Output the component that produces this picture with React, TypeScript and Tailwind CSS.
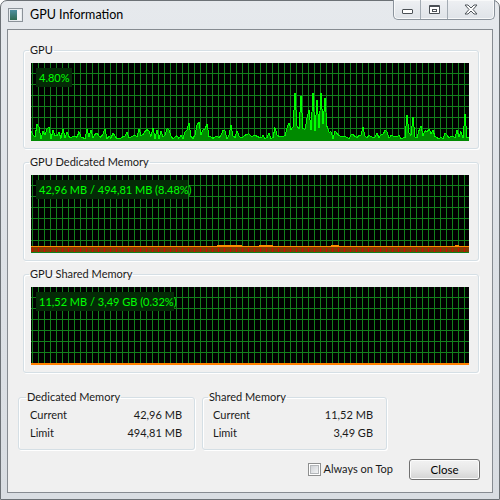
import React from "react";

const W = 438;
const H = 78;

function rng(seed: number) {
  let s = seed;
  return () => {
    s = (s * 1103515245 + 12345) % 2147483648;
    return s / 2147483648;
  };
}

function gpuSeries() {
  const r = rng(7);
  const peaks: Record<number, number> = { 264: 47, 270: 44, 278: 30, 282: 47, 286: 40, 290: 47, 294: 42, 376: 25, 382: 23, 434: 26, 168: 18, 176: 16, 200: 15 };
  const pts: [number, number][] = [];
  for (let x = 0; x <= W; x += 2) {
    let h = 1 + r() * 4;
    if (r() < 0.35) h += r() * 11;
    if (x > 150 && x < 220 && r() < 0.4) h += r() * 8;
    if (x > 256 && x < 300) h += 6 + r() * 10;
    if (peaks[x]) h = peaks[x];
    pts.push([x, H - 1 - h]);
  }
  return pts;
}

const gpu = gpuSeries();

function Grid() {
  const v = [];
  for (let x = 1; x < W; x += 6) v.push(x);
  const hz = [10, 21, 32, 43, 54, 65, 76];
  return (
    <g stroke="#13801c" strokeWidth="1" shapeRendering="crispEdges">
      {v.map((x) => (
        <line key={"v" + x} x1={x + 0.5} y1={0} x2={x + 0.5} y2={H} />
      ))}
      {hz.map((y) => (
        <line key={"h" + y} x1={0} y1={y + 0.5} x2={W} y2={y + 0.5} />
      ))}
    </g>
  );
}

const bumps = [
  [186, 24],
  [205, 6],
  [228, 14],
  [300, 8],
  [424, 4],
];

function Graph({ label, labelWidth, kind }: { label: string; labelWidth: string; kind: "gpu" | "ded" | "shared" }) {
  const reds = [];
  for (let x = 1; x < W; x += 6) reds.push(x);
  const poly = gpu.map(([x, y]) => `${x},${y}`).join(" ");
  return (
    <div className="relative w-[438px] h-[78px] bg-black">
      <svg width={W} height={H} className="block">
        <Grid />
        {kind === "gpu" && (
          <g shapeRendering="crispEdges">
            <polygon points={`0,${H} ${poly} ${W},${H}`} fill="#008a00" />
            <polyline points={poly} fill="none" stroke="#00ff00" strokeWidth="1" />
          </g>
        )}
        {kind === "ded" && (
          <g shapeRendering="crispEdges">
            <rect x={0} y={72} width={W} height={5} fill="#803c00" />
            {reds.map((x) => (
              <rect key={x} x={x} y={73} width={1} height={4} fill="#d80000" />
            ))}
            <rect x={0} y={71} width={W} height={1} fill="#ff8c00" />
            {bumps.map(([x, w]) => (
              <rect key={x} x={x} y={70} width={w} height={1} fill="#ff8c00" />
            ))}
            <rect x={0} y={77} width={W} height={1} fill="#12801a" />
          </g>
        )}
        {kind === "shared" && <rect x={0} y={76} width={W} height={2} fill="#ff8000" shapeRendering="crispEdges" />}
      </svg>
      <div className={`absolute left-[5px] top-[5px] h-[19px] ${labelWidth} bg-[#042a06] flex items-center pl-[3px] text-[11px] leading-none text-[#00ff00] whitespace-nowrap`}>
        {label}
      </div>
    </div>
  );
}

function GraphGroup({ title, children }: { title: string; children: React.ReactNode }) {
  return (
    <fieldset className="w-[456px] border border-[#d5dfe5] rounded-[3px] shadow-[inset_1px_1px_0_#ffffff,1px_1px_0_#ffffff] px-[7px] pt-[5px] pb-[7px] min-w-0">
      <legend className="-ml-[2px] px-[1px] text-[11px] leading-[16px] text-[#1a1a1a]">{title}</legend>
      {children}
    </fieldset>
  );
}

function InfoGroup({ title, rows, w, pl, pr, lm }: { title: string; rows: [string, string][]; w: string; pl: string; pr: string; lm: string }) {
  return (
    <fieldset className={`${w} ${pl} ${pr} border border-[#d5dfe5] rounded-[3px] shadow-[inset_1px_1px_0_#ffffff,1px_1px_0_#ffffff] pt-[1px] pb-[7px] min-w-0`}>
      <legend className={`${lm} px-[1px] text-[11px] leading-[16px] text-[#1a1a1a]`}>{title}</legend>
      {rows.map(([k, v]) => (
        <div key={k} className="flex h-[18px] items-center justify-between text-[11px] text-[#1a1a1a]">
          <span>{k}</span>
          <span>{v}</span>
        </div>
      ))}
    </fieldset>
  );
}

export default function App() {
  return (
    <div className="w-[500px] h-[500px] bg-white" style={{ fontFamily: 'Lato, "Noto Sans", sans-serif' }}>
      <div className="w-[500px] h-[500px] flex flex-col rounded-t-[7px] border border-[#6c7176] bg-gradient-to-b from-[#e6e9ed] via-[#dde1e6] to-[#d9dde2] px-[6px] pb-[6px]">
        <div className="h-[28px] flex items-start relative">
          <div className="flex items-center mt-[7px] ml-[1px]">
            <svg width="15" height="14" viewBox="0 0 15 14">
              <defs>
                <linearGradient id="ic" x1="0" y1="0" x2="0" y2="1">
                  <stop offset="0" stopColor="#4f8fa0" />
                  <stop offset="1" stopColor="#2f6b52" />
                </linearGradient>
              </defs>
              <rect x="0.5" y="0.5" width="14" height="13" fill="#e8ecef" stroke="#8b9299" />
              <rect x="2" y="2" width="7" height="10" fill="url(#ic)" />
              <rect x="9" y="2" width="4" height="10" fill="#f4f6f8" />
            </svg>
            <span className="ml-[7px] text-[12.5px] text-black leading-none">GPU Information</span>
          </div>
          <div className="absolute right-[-2px] top-[-1px] flex h-[20px] rounded-b-[5px] border border-t-0 border-[#8b939c] bg-gradient-to-b from-[#eef0f3] to-[#dfe3e8] overflow-hidden shadow-[inset_0_0_0_1px_#f8f9fa]">
            <div className="w-[27px] flex items-center justify-center border-r border-[#a3abb3]">
              <div className="w-[11px] h-[5px] mt-[4px] border border-[#4b5056] bg-white rounded-[1px]" />
            </div>
            <div className="w-[27px] flex items-center justify-center border-r border-[#a3abb3]">
              <div className="w-[11px] h-[9px] border border-[#4b5056] border-t-[2px] bg-white rounded-[1px] flex items-center justify-center">
                <div className="w-[5px] h-[3px] border border-[#4b5056]" />
              </div>
            </div>
            <div className="w-[46px] flex items-center justify-center">
              <svg width="14" height="11" viewBox="0 0 14 11">
                <path d="M1 1 H4 L7 4 L10 1 H13 L9 5.5 L13 10 H10 L7 7 L4 10 H1 L5 5.5 Z" fill="#ffffff" stroke="#50565c" strokeWidth="1" strokeLinejoin="round" />
              </svg>
            </div>
          </div>
        </div>
        <div className="flex-1 border border-[#868b91] bg-[#f0f0f0] flex flex-col">
          <div className="flex flex-col gap-[5px] mt-[12px] pl-[15px]">
            <GraphGroup title="GPU">
              <Graph kind="gpu" label="4.80%" labelWidth="w-[36px]" />
            </GraphGroup>
            <GraphGroup title="GPU Dedicated Memory">
              <Graph kind="ded" label="42,96 MB / 494,81 MB (8.48%)" labelWidth="w-[152px]" />
            </GraphGroup>
            <GraphGroup title="GPU Shared Memory">
              <Graph kind="shared" label="11,52 MB / 3,49 GB (0.32%)" labelWidth="w-[138px]" />
            </GraphGroup>
          </div>
          <div className="flex gap-[7px] mt-[16px] pl-[10px]">
            <InfoGroup
              title="Dedicated Memory"
              rows={[
                ["Current", "42,96 MB"],
                ["Limit", "494,81 MB"],
              ]}
              w="w-[177px]"
              pl="pl-[11px]"
              pr="pr-[12px]"
              lm="-ml-[4px]"
            />
            <InfoGroup
              title="Shared Memory"
              rows={[
                ["Current", "11,52 MB"],
                ["Limit", "3,49 GB"],
              ]}
              w="w-[185px]"
              pl="pl-[10px]"
              pr="pr-[13px]"
              lm="-ml-[5px]"
            />
          </div>
          <div className="flex items-center justify-end mt-[9px] pr-[12px]">
            <label className="flex items-center text-[11px] text-[#1a1a1a]">
              <span className="w-[13px] h-[13px] border border-[#8e8f8f] bg-white flex items-center justify-center">
                <span className="w-[9px] h-[9px] border border-[#b4b7ba] bg-gradient-to-br from-[#cfd2d6] to-[#f3f4f5]" />
              </span>
              <span className="ml-[3px]">Always on Top</span>
            </label>
            <button className="ml-[16px] w-[71px] h-[21px] rounded-[3px] border border-[#707070] bg-gradient-to-b from-[#f2f2f2] via-[#e8e8e8] to-[#d3d3d3] shadow-[inset_0_0_0_1px_#fcfcfc] text-[11.5px] text-black leading-none">
              Close
            </button>
          </div>
        </div>
      </div>
    </div>
  );
}
